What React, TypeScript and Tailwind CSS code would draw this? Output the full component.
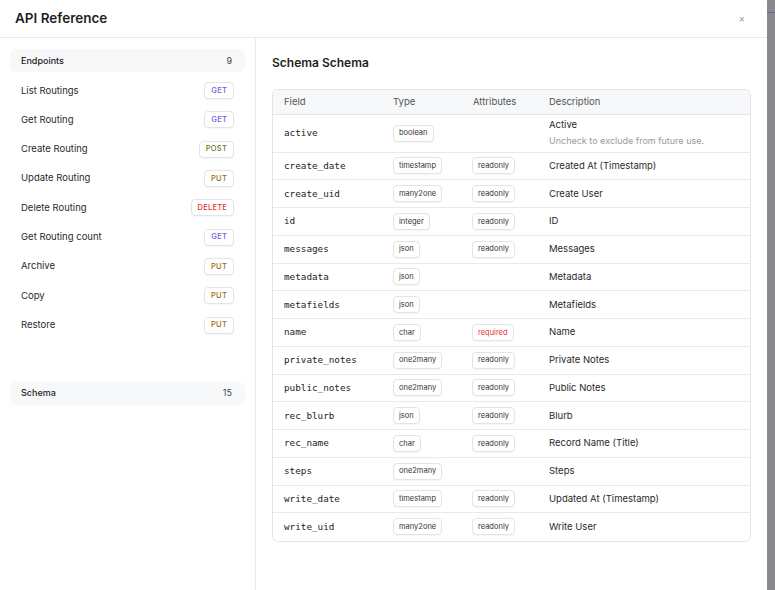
import React from "react";

type Method = "GET" | "POST" | "PUT" | "DELETE";

const endpoints: { name: string; method: Method }[] = [
  { name: "List Routings", method: "GET" },
  { name: "Get Routing", method: "GET" },
  { name: "Create Routing", method: "POST" },
  { name: "Update Routing", method: "PUT" },
  { name: "Delete Routing", method: "DELETE" },
  { name: "Get Routing count", method: "GET" },
  { name: "Archive", method: "PUT" },
  { name: "Copy", method: "PUT" },
  { name: "Restore", method: "PUT" },
];

const fields: {
  name: string;
  type: string;
  attr?: "readonly" | "required";
  desc: string;
  help?: string;
}[] = [
  { name: "active", type: "boolean", desc: "Active", help: "Uncheck to exclude from future use." },
  { name: "create_date", type: "timestamp", attr: "readonly", desc: "Created At (Timestamp)" },
  { name: "create_uid", type: "many2one", attr: "readonly", desc: "Create User" },
  { name: "id", type: "integer", attr: "readonly", desc: "ID" },
  { name: "messages", type: "json", attr: "readonly", desc: "Messages" },
  { name: "metadata", type: "json", desc: "Metadata" },
  { name: "metafields", type: "json", desc: "Metafields" },
  { name: "name", type: "char", attr: "required", desc: "Name" },
  { name: "private_notes", type: "one2many", attr: "readonly", desc: "Private Notes" },
  { name: "public_notes", type: "one2many", attr: "readonly", desc: "Public Notes" },
  { name: "rec_blurb", type: "json", attr: "readonly", desc: "Blurb" },
  { name: "rec_name", type: "char", attr: "readonly", desc: "Record Name (Title)" },
  { name: "steps", type: "one2many", desc: "Steps" },
  { name: "write_date", type: "timestamp", attr: "readonly", desc: "Updated At (Timestamp)" },
  { name: "write_uid", type: "many2one", attr: "readonly", desc: "Write User" },
];

const methodColor = (m: Method): string => {
  switch (m) {
    case "GET":
      return "text-[#6d5ce8]";
    case "POST":
      return "text-[#5a7a1e]";
    case "PUT":
      return "text-[#9a6a10]";
    case "DELETE":
      return "text-[#e5322d]";
  }
};

const SectionHead = ({ label, count }: { label: string; count: number }) => (
  <div className="flex h-[23px] items-center justify-between rounded-md bg-[#f7f8fa] pl-[11px] pr-[13px] text-[9px] font-medium text-[#222]">
    <span>{label}</span>
    <span className="font-normal text-[#444]">{count}</span>
  </div>
);

const Chip = ({ children, className = "" }: { children: React.ReactNode; className?: string }) => (
  <span
    className={`inline-flex h-[17px] items-center rounded-[4px] border border-[#e3e4e8] bg-white px-[5px] text-[7.5px] leading-none shadow-[0_1px_1px_rgba(0,0,0,0.04)] ${className}`}
  >
    {children}
  </span>
);

export default function App() {
  return (
    <div
      className="flex h-[590px] w-[775px] overflow-hidden bg-[#8a8a8c]"
      style={{ fontFamily: "Inter, 'Noto Sans', sans-serif" }}
    >
      <div className="flex h-full w-[767px] flex-col bg-white">
        <header className="flex h-[38px] shrink-0 items-center justify-between border-b border-[#e8e8ea] pl-[15px] pr-[22px]">
          <h1 className="text-[13.5px] font-semibold text-[#1f1f1f]">API Reference</h1>
          <span className="text-[10px] text-[#9a9a9a]">×</span>
        </header>

        <div className="flex min-h-0 flex-1">
          <aside className="w-[256px] shrink-0 border-r border-[#e8e8ea] px-[10px] pt-[11px]">
            <SectionHead label="Endpoints" count={9} />
            <ul className="mt-[4px]">
              {endpoints.map((e) => (
                <li
                  key={e.name}
                  className="flex h-[29.3px] items-center justify-between pl-[11px] pr-[11px] text-[9.5px] text-[#2a2a2a]"
                >
                  <span>{e.name}</span>
                  <Chip className={`px-[6px] font-medium tracking-[0.03em] ${methodColor(e.method)}`}>
                    {e.method}
                  </Chip>
                </li>
              ))}
            </ul>
            <div className="mt-[42px]">
              <SectionHead label="Schema" count={15} />
            </div>
          </aside>

          <main className="flex-1 pl-[16px] pr-[16px] pt-[16px]">
            <h2 className="text-[12px] font-semibold text-[#1f1f1f]">Schema Schema</h2>
            <div className="mt-[17px] overflow-hidden rounded-md border border-[#e3e4e8]">
              <table className="w-full table-fixed border-collapse text-left">
                <colgroup>
                  <col className="w-[109px]" />
                  <col className="w-[80px]" />
                  <col className="w-[76px]" />
                  <col />
                </colgroup>
                <thead>
                  <tr className="h-[24px] border-b border-[#e3e4e8] bg-[#f7f8fa] text-[9.5px] text-[#555]">
                    <th className="pl-[11px] font-normal">Field</th>
                    <th className="pl-[11px] font-normal">Type</th>
                    <th className="pl-[11px] font-normal">Attributes</th>
                    <th className="pl-[11px] font-normal">Description</th>
                  </tr>
                </thead>
                <tbody>
                  {fields.map((f, i) => (
                    <tr
                      key={f.name}
                      className={`${f.help ? "h-[38px]" : "h-[27.75px]"} ${
                        i < fields.length - 1 ? "border-b border-[#e8e9ec]" : ""
                      }`}
                    >
                      <td
                        className="pl-[11px] align-middle text-[9.3px] text-[#222]"
                        style={{ fontFamily: "'DejaVu Sans Mono', monospace" }}
                      >
                        {f.name}
                      </td>
                      <td className="pl-[11px] align-middle">
                        <div className="flex items-center">
                          <Chip className="text-[#333]">{f.type}</Chip>
                        </div>
                      </td>
                      <td className="pl-[10px] align-middle">
                        {f.attr && (
                          <div className="flex items-center">
                            <Chip className={f.attr === "required" ? "text-[#e5322d]" : "text-[#333]"}>
                              {f.attr}
                            </Chip>
                          </div>
                        )}
                      </td>
                      <td className="pl-[11px] align-middle text-[9.5px] text-[#2a2a2a]">
                        <div>{f.desc}</div>
                        {f.help && <div className="mt-[2px] text-[9px] text-[#9a9a9a]">{f.help}</div>}
                      </td>
                    </tr>
                  ))}
                </tbody>
              </table>
            </div>
          </main>
        </div>
      </div>
      <div className="flex-1 pt-[12px]">
        <div className="h-px bg-[#6b63a8]" />
      </div>
    </div>
  );
}
